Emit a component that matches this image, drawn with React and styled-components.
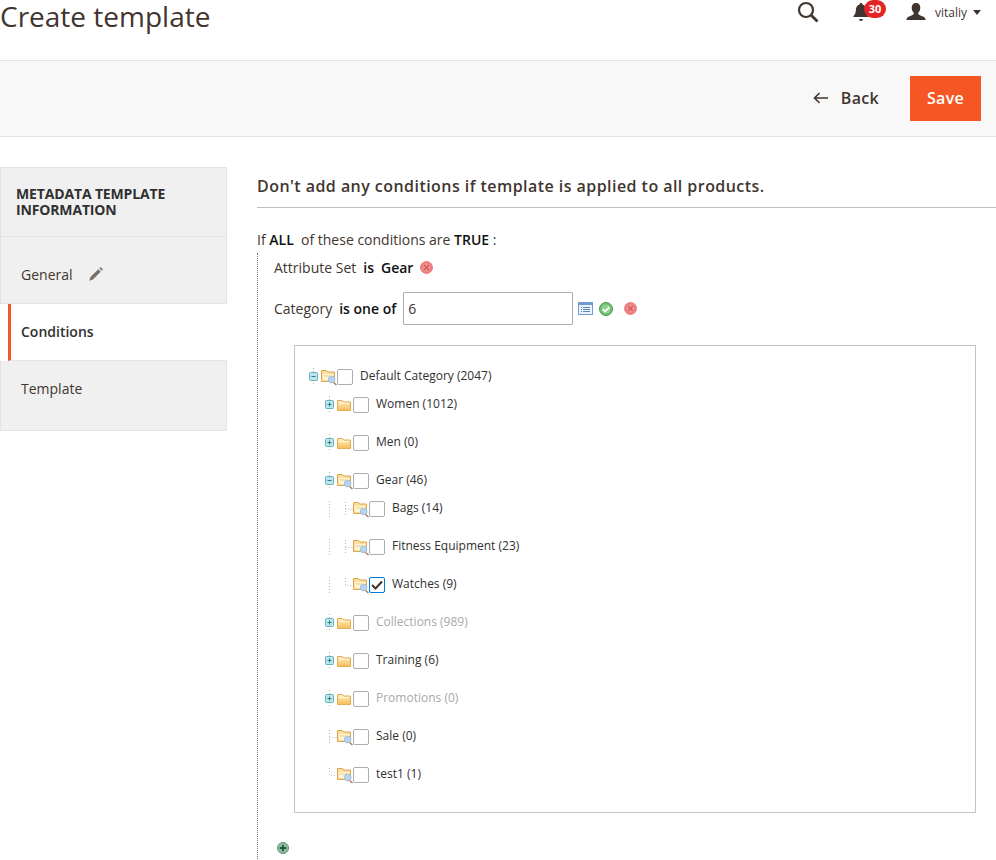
import styled, { createGlobalStyle } from "styled-components";

const GlobalStyle = createGlobalStyle`
  html, body {
    margin: 0;
    padding: 0;
    background: #fff;
    overflow: hidden;
  }
  body {
    font-family: "Open Sans", "Liberation Sans", sans-serif;
    color: #303030;
  }
  * {
    box-sizing: border-box;
  }
`;

const Page = styled.div`
  width: 996px;
  height: 860px;
  overflow: hidden;
`;

const Header = styled.header`
  height: 61px;
  display: flex;
  align-items: flex-start;
  justify-content: space-between;
  border-bottom: 1px solid #e3e3e3;
`;

const Title = styled.h1`
  margin: 0;
  font-size: 28px;
  line-height: 33px;
  font-weight: 400;
  color: #41362f;
`;

const HeaderTools = styled.div`
  display: flex;
  align-items: flex-start;
  padding-right: 15px;
`;

const ToolButton = styled.div`
  position: relative;
  display: flex;
  align-items: center;
  height: 24px;
  margin-left: ${(p) => p.$gap}px;
`;

const Badge = styled.span`
  position: absolute;
  left: 11px;
  top: 0;
  width: 22px;
  height: 18px;
  border-radius: 9px;
  background: #e22626;
  color: #fff;
  font-size: 11px;
  font-weight: 700;
  line-height: 17px;
  text-align: center;
`;

const UserName = styled.span`
  margin-left: 9px;
  font-size: 12px;
  color: #41362f;
`;

const Caret = styled.span`
  width: 0;
  height: 0;
  margin-left: 6px;
  border-left: 4px solid transparent;
  border-right: 4px solid transparent;
  border-top: 5px solid #41362f;
`;

const ActionBar = styled.div`
  height: 76px;
  display: flex;
  align-items: center;
  justify-content: flex-end;
  padding: 0 15px 0 0;
  background: #f8f8f8;
  border-bottom: 1px solid #e3e3e3;
`;

const BackLink = styled.div`
  display: flex;
  align-items: center;
  gap: 13px;
  margin-right: 31px;
  padding-bottom: 2px;
  font-size: 16px;
  font-weight: 600;
  letter-spacing: 0.3px;
  color: #41362f;
`;

const SaveButton = styled.button`
  width: 71px;
  height: 45px;
  border: 0;
  padding: 0 0 2px;
  background: #f55624;
  color: #fff;
  font-family: inherit;
  font-size: 16px;
  font-weight: 600;
  letter-spacing: 0.3px;
`;

const Body = styled.div`
  display: flex;
  gap: 30px;
  padding-top: 30px;
`;

const Sidebar = styled.aside`
  width: 227px;
  flex: none;
`;

const SidebarTitle = styled.div`
  height: 70px;
  padding: 18px 15px 0;
  background: #f0f0f0;
  border: 1px solid #e3e3e3;
  font-size: 14px;
  line-height: 16px;
  font-weight: 700;
  letter-spacing: -0.15px;
  color: #303030;
`;

const NavItem = styled.div`
  display: flex;
  align-items: center;
  gap: 15px;
  height: ${(p) => p.$height}px;
  padding: ${(p) => p.$top || 0}px 0 ${(p) => p.$bottom || 0}px ${(p) => (p.$active ? "10px" : "20px")};
  margin-left: ${(p) => (p.$active ? "8px" : "0")};
  background: ${(p) => (p.$active ? "#fff" : "#f0f0f0")};
  border-bottom: 1px solid #e3e3e3;
  border-left: ${(p) => (p.$active ? "3px solid #f55624" : "1px solid #e3e3e3")};
  border-right: ${(p) => (p.$active ? "0" : "1px solid #e3e3e3")};
  font-size: 14px;
  font-weight: ${(p) => (p.$active ? 600 : 400)};
  color: ${(p) => (p.$active ? "#303030" : "#41362f")};
`;

const Main = styled.main`
  flex: 1;
  min-width: 0;
`;

const SectionTitle = styled.h2`
  margin: 0;
  height: 41px;
  padding-top: 9px;
  font-size: 16px;
  line-height: 20px;
  font-weight: 600;
  letter-spacing: 0.45px;
  color: #41362f;
  border-bottom: 1px solid #c2bdb6;
`;

const ConditionIntro = styled.div`
  margin-top: 22px;
  font-size: 14px;
  line-height: 19px;
  color: #41362f;
`;

const ConditionGroup = styled.div`
  margin-top: 4px;
  padding: 5px 0 0 16px;
  height: 620px;
  border-left: 1px dotted #777;
`;

const ConditionRow = styled.div`
  display: flex;
  align-items: center;
  height: ${(p) => p.$height}px;
  margin-top: ${(p) => p.$top || 0}px;
  font-size: 14px;
  color: #41362f;
`;

const Strong = styled.b`
  margin-left: ${(p) => p.$gap ?? 7}px;
  font-weight: 600;
  color: #111;
`;

const RuleInput = styled.input`
  width: 170px;
  height: 33px;
  margin-left: 7px;
  padding: 0 4px;
  border: 1px solid #adadad;
  border-radius: 1px;
  font-family: inherit;
  font-size: 14px;
  color: #41362f;
  outline: 0;
`;

const IconSlot = styled.span`
  display: inline-flex;
  margin-left: ${(p) => p.$gap}px;
`;

const TreeBox = styled.div`
  width: 682px;
  height: 468px;
  margin: 20px 0 0 20px;
  padding: 16px 0 0 14px;
  border: 1px solid #c4c4c4;
`;

const TreeRow = styled.div`
  display: flex;
  align-items: center;
  height: 28px;
  margin-bottom: ${(p) => (p.$tight ? 0 : 10)}px;
  padding-left: ${(p) => (p.$level > 0 ? 16 : 0)}px;
`;

const Slot = styled.span`
  display: flex;
  flex: none;
  width: ${(p) => p.$width}px;
  height: 28px;
`;

const TreeCheck = styled.span`
  display: flex;
  align-items: center;
  justify-content: center;
  flex: none;
  width: 16px;
  height: 16px;
  margin-top: 2px;
  background: #fff;
  border: 1px solid ${(p) => (p.$checked ? "#007bdb" : "#adadad")};
  border-radius: 2px;
`;

const TreeLabel = styled.span`
  margin-left: 7px;
  font-size: 12px;
  line-height: 16px;
  color: ${(p) => (p.$muted ? "#a9a9a9" : "#303030")};
`;

const AddRow = styled.div`
  display: flex;
  margin: 29px 0 0 3px;
`;

const Search = () => (
  <svg width="22" height="22" viewBox="0 0 22 22" fill="none" stroke="#41362f" strokeWidth="2.2">
    <circle cx="9" cy="9" r="7" />
    <path d="M14 14l6.5 6.5" strokeWidth="2.8" />
  </svg>
);

const Bell = () => (
  <svg width="16" height="20" viewBox="0 0 16 20" fill="#41362f">
    <path d="M8 1c.9 0 1.5.6 1.6 1.5 2.4.7 3.4 2.7 3.5 5.3.1 3 .8 4.7 2.4 6.2v1H.5v-1c1.6-1.5 2.3-3.2 2.4-6.2.1-2.6 1.1-4.6 3.5-5.3C6.5 1.6 7.1 1 8 1z" />
    <path d="M6 17h4a2 2 0 0 1-4 0z" />
  </svg>
);

const User = () => (
  <svg width="20" height="20" viewBox="0 0 20 20" fill="#41362f">
    <path d="M10 1c2.7 0 4.3 1.9 4.3 4.7 0 2.2-.9 4-2 5V12c.4.9 1.8 1.3 3.4 2 1.800.7 3.3 1.300 3.800 3v1H.5v-1c.5-1.700 2-2.300 3.800-3 1.600-.7 3-1.100 3.400-2v-1.300c-1.100-1-2-2.800-2-5C5.700 2.900 7.300 1 10 1z" />
  </svg>
);

const BackArrow = () => (
  <svg width="15" height="12" viewBox="0 0 15 12" fill="none" stroke="#41362f" strokeWidth="1.6">
    <path d="M15 6H1.500M6.500 1l-5 5 5 5" />
  </svg>
);

const Pencil = () => (
  <svg width="15" height="15" viewBox="0 0 15 15" fill="#7a6f68">
    <path d="M10.300 2.300l2.400 2.400-7.800 7.800-3.700 1.300 1.300-3.700z" />
    <path d="M11.300 1.300l.8-.7c.3-.3.7-.3 1 0l1.400 1.400c.3.300.3.700 0 1l-.7.800z" />
  </svg>
);

const Remove = () => (
  <svg width="13" height="13" viewBox="0 0 13 13">
    <defs>
      <radialGradient id="removeFill">
        <stop offset="0" stopColor="#f6a5a5" />
        <stop offset="1" stopColor="#ee7676" />
      </radialGradient>
    </defs>
    <circle cx="6.500" cy="6.500" r="6" fill="url(#removeFill)" stroke="#e78080" />
    <path d="M4.200 4.200l4.600 4.600M8.800 4.200l-4.600 4.600" stroke="#c95050" strokeWidth="1.100" />
  </svg>
);

const Chooser = () => (
  <svg width="15" height="13" viewBox="0 0 15 13">
    <rect x=".5" y=".5" width="14" height="12" fill="#eaf2fb" stroke="#6f9bd0" />
    <rect x="1" y="1" width="13" height="2" fill="#6f9bd0" />
    <path d="M3 5.500h1M5 5.500h7M3 7.500h1M5 7.500h7M3 9.500h1M5 9.500h7" stroke="#5d86b5" />
  </svg>
);

const Apply = () => (
  <svg width="14" height="14" viewBox="0 0 14 14">
    <circle cx="7" cy="7" r="6.500" fill="#6cc06c" stroke="#4b9a50" />
    <circle cx="7" cy="7" r="4.500" fill="#8fd08f" />
    <path d="M3.800 7.200l2.300 2.300 4.200-4.400" fill="none" stroke="#fff" strokeWidth="1.800" />
  </svg>
);

const Add = () => (
  <svg width="12" height="12" viewBox="0 0 12 12">
    <circle cx="6" cy="6" r="5.500" fill="#93bba0" stroke="#5e9275" />
    <path d="M6 2.800v6.400M2.800 6h6.400" stroke="#235c3c" strokeWidth="1.800" />
  </svg>
);

// toggle box with its dotted stem; the stem sits on x=4.5 of the 12px slot
const Toggle = ({ open }) => (
  <svg width="12" height="28" viewBox="0 0 12 28">
    <path d="M4.500 6v16" stroke="#b5b5b5" strokeDasharray="1 2" />
    <rect x=".5" y="10.500" width="8" height="8" rx="1" fill="#bfe6ea" stroke="#5fb4bd" />
    <path d={open ? "M2.500 14.500h4" : "M2.500 14.500h4M4.500 12.500v4"} stroke="#2f7f88" />
  </svg>
);

const Elbow = ({ last }) => (
  <svg width="12" height="28" viewBox="0 0 12 28">
    <path d={last ? "M4.500 8v7.500H12" : "M4.500 8v15M4.500 15.500H12"} fill="none" stroke="#b5b5b5" strokeDasharray="1 2" />
  </svg>
);

const Guide = () => (
  <svg width="16" height="28" viewBox="0 0 16 28">
    <path d="M4.500 7v16" stroke="#b5b5b5" strokeDasharray="1 2" />
  </svg>
);

const Folder = ({ leaf }) => (
  <svg width="16" height="28" viewBox="0 0 16 28">
    <defs>
      <linearGradient id="folderFill" x1="0" y1="0" x2="0" y2="1">
        <stop offset="0" stopColor="#fff0c4" />
        <stop offset="1" stopColor="#f7bd55" />
      </linearGradient>
    </defs>
    {leaf ? (
      <>
        <path d="M.5 8.500h5l1.500 1.500h6.500v9.500H.5z" fill="#fbdf9c" stroke="#dda653" />
        <rect x="2" y="12" width="10" height="6" fill="#fff4d6" />
        <path d="M3 14h7" stroke="#e8c98a" />
        <path d="M12 20l3.500 3" stroke="#b5794a" strokeWidth="1.500" />
        <circle cx="10.700" cy="17.500" r="3.300" fill="#b7d5ee" stroke="#9dbfdc" />
      </>
    ) : (
      <>
        <path d="M.5 10.500h5l1.500 1.500h6.500v8.500H.5z" fill="url(#folderFill)" stroke="#e2ab55" />
        <path d="M2 13.500h10" stroke="#fff6dc" />
      </>
    )}
  </svg>
);

const CheckMark = () => (
  <svg width="12" height="10" viewBox="0 0 12 10" fill="none" stroke="#41362f" strokeWidth="2">
    <path d="M1 5l3.500 3.500L11 1.500" />
  </svg>
);

const categories = [
  { label: "Default Category (2047)", level: 0, toggle: "open", leaf: true, tight: true },
  { label: "Women (1012)", level: 1, toggle: "closed" },
  { label: "Men (0)", level: 1, toggle: "closed" },
  { label: "Gear (46)", level: 1, toggle: "open", leaf: true, tight: true },
  { label: "Bags (14)", level: 2, leaf: true },
  { label: "Fitness Equipment (23)", level: 2, leaf: true },
  { label: "Watches (9)", level: 2, leaf: true, checked: true, last: true },
  { label: "Collections (989)", level: 1, toggle: "closed", muted: true },
  { label: "Training (6)", level: 1, toggle: "closed" },
  { label: "Promotions (0)", level: 1, toggle: "closed", muted: true },
  { label: "Sale (0)", level: 1, leaf: true },
  { label: "test1 (1)", level: 1, leaf: true, last: true },
];

const App = () => {
  return (
    <Page>
      <GlobalStyle />
      <Header>
        <Title>Create template</Title>
        <HeaderTools>
          <ToolButton $gap={0}>
            <Search />
          </ToolButton>
          <ToolButton $gap={34}>
            <Bell />
            <Badge>30</Badge>
          </ToolButton>
          <ToolButton $gap={37}>
            <User />
            <UserName>vitaliy</UserName>
            <Caret />
          </ToolButton>
        </HeaderTools>
      </Header>

      <ActionBar>
        <BackLink>
          <BackArrow />
          Back
        </BackLink>
        <SaveButton>Save</SaveButton>
      </ActionBar>

      <Body>
        <Sidebar>
          <SidebarTitle>METADATA TEMPLATE INFORMATION</SidebarTitle>
          <NavItem $height={67} $top={9}>
            General
            <Pencil />
          </NavItem>
          <NavItem $height={57} $bottom={2} $active>
            Conditions
          </NavItem>
          <NavItem $height={70} $bottom={14}>
            Template
          </NavItem>
        </Sidebar>

        <Main>
          <SectionTitle>Don't add any conditions if template is applied to all products.</SectionTitle>
          <ConditionIntro>
            If <Strong $gap={0}>ALL</Strong>&nbsp; of these conditions are <Strong $gap={0}>TRUE</Strong> :
          </ConditionIntro>
          <ConditionGroup>
            <ConditionRow $height={19}>
              Attribute Set
              <Strong>is</Strong>
              <Strong>Gear</Strong>
              <IconSlot $gap={7}>
                <Remove />
              </IconSlot>
            </ConditionRow>
            <ConditionRow $height={33} $top={15}>
              Category
              <Strong>is one of</Strong>
              <RuleInput defaultValue="6" />
              <IconSlot $gap={5}>
                <Chooser />
              </IconSlot>
              <IconSlot $gap={6}>
                <Apply />
              </IconSlot>
              <IconSlot $gap={11}>
                <Remove />
              </IconSlot>
            </ConditionRow>
            <TreeBox>
              {categories.map((c) => (
                <TreeRow key={c.label} $level={c.level} $tight={c.tight}>
                  {c.level === 2 && (
                    <Slot $width={16}>
                      <Guide />
                    </Slot>
                  )}
                  <Slot $width={12}>{c.toggle ? <Toggle open={c.toggle === "open"} /> : <Elbow last={c.last} />}</Slot>
                  <Slot $width={16}>
                    <Folder leaf={c.leaf} />
                  </Slot>
                  <TreeCheck $checked={c.checked}>{c.checked && <CheckMark />}</TreeCheck>
                  <TreeLabel $muted={c.muted}>{c.label}</TreeLabel>
                </TreeRow>
              ))}
            </TreeBox>
            <AddRow>
              <Add />
            </AddRow>
          </ConditionGroup>
        </Main>
      </Body>
    </Page>
  );
};

export default App;
